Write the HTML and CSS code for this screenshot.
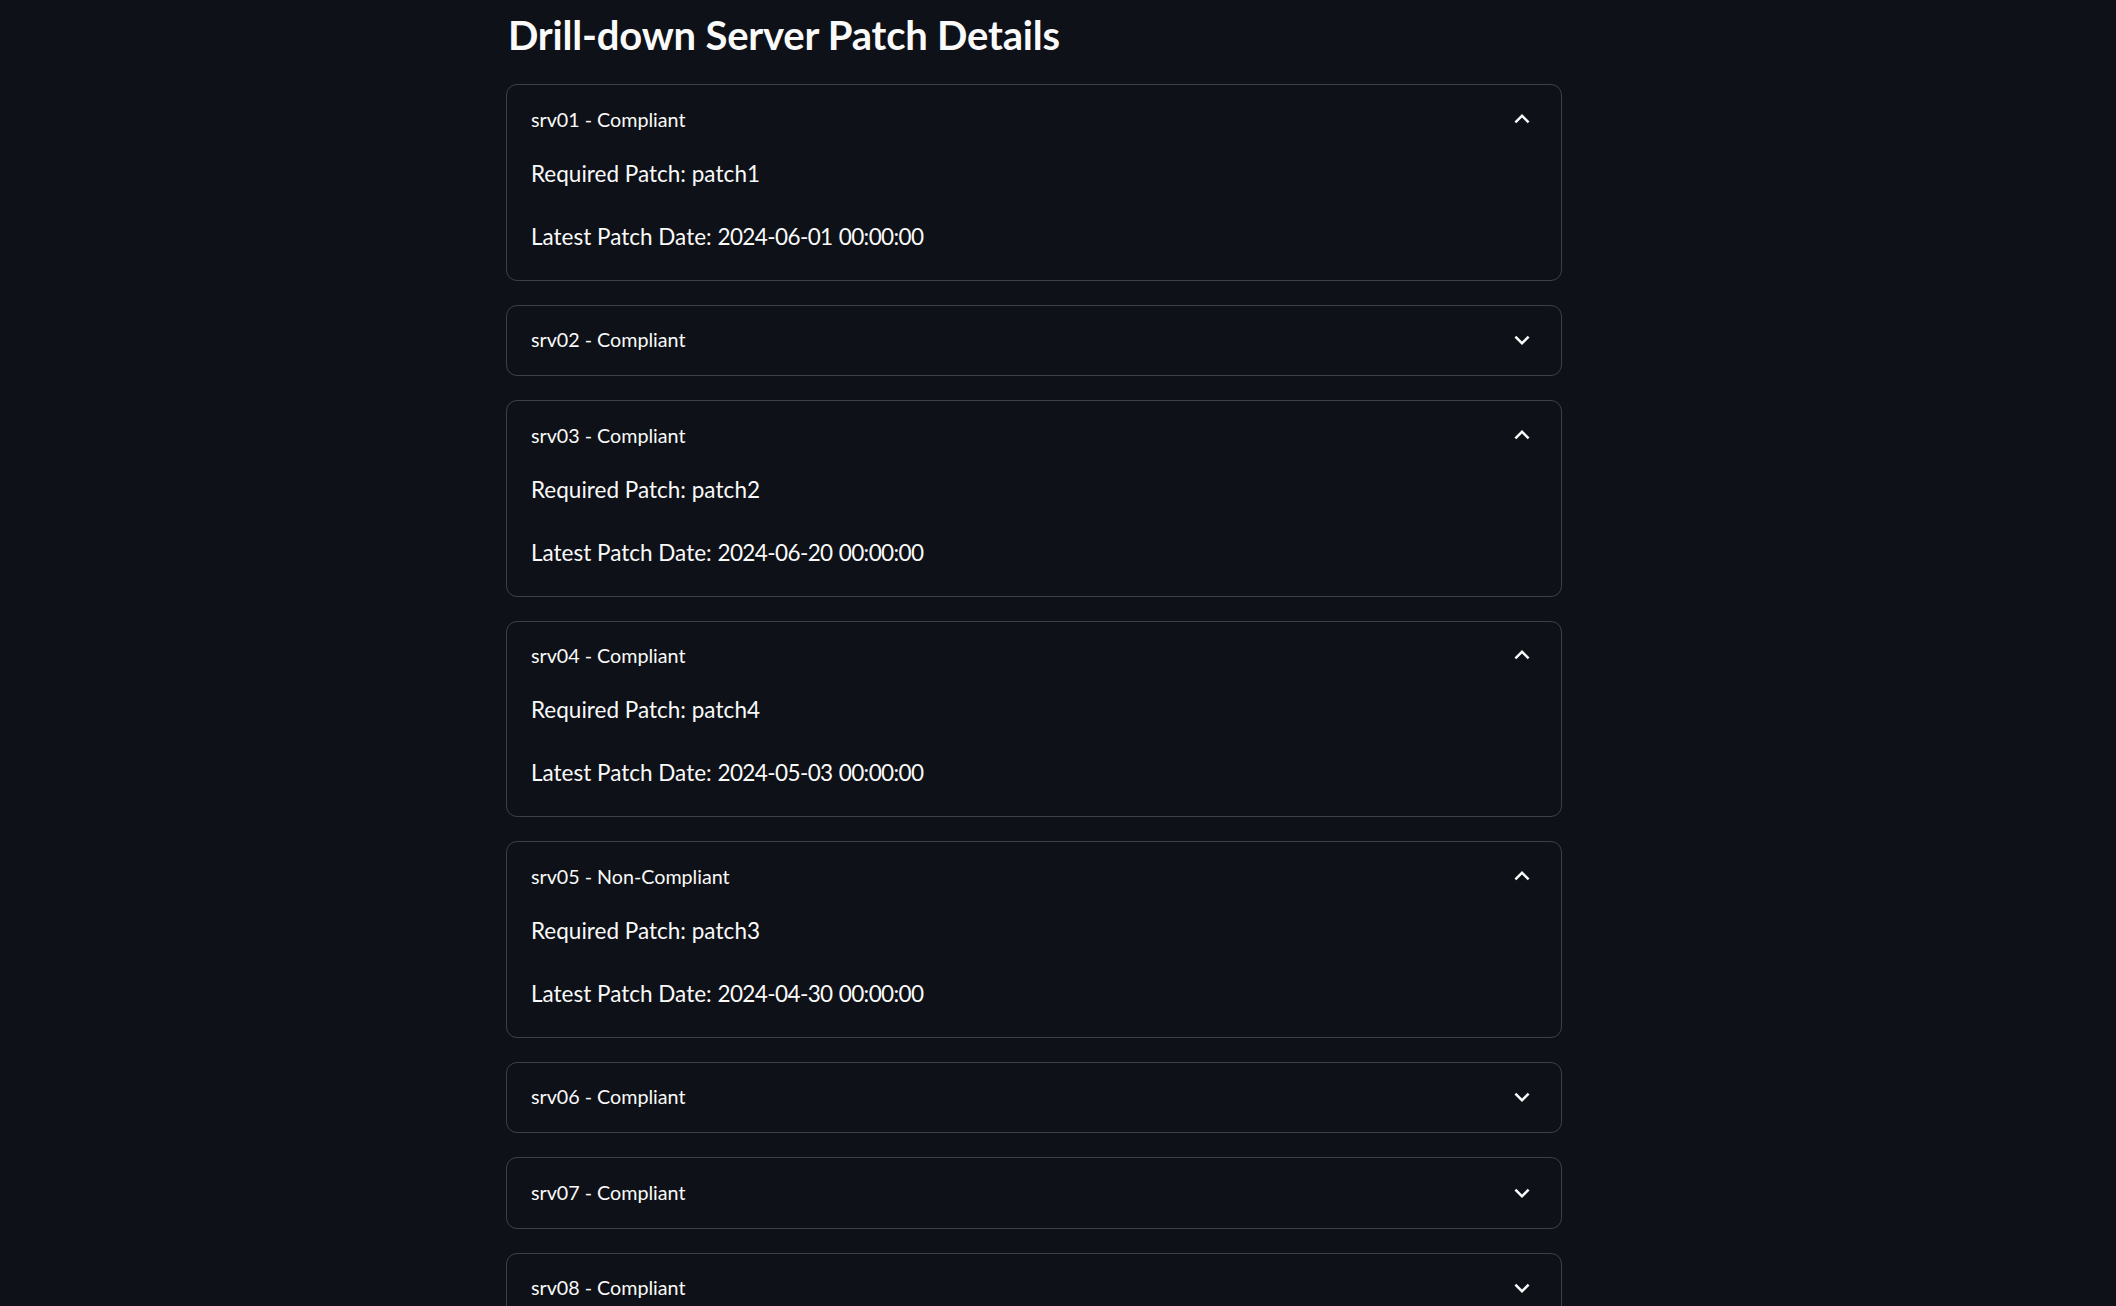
FILE: index.html
```html
<!DOCTYPE html>
<html lang="en">
<head>
<meta charset="utf-8">
<title>Drill-down Server Patch Details</title>
<link rel="stylesheet" href="styles.css">
</head>
<body>
<main class="main">
  <h3 class="page-title">Drill-down Server Patch Details</h3>
  <div class="expander-list">
    <details class="expander" open>
      <summary class="expander-header">
        <span class="expander-label">srv01 - Compliant</span>
        <svg class="chev chev-up" viewBox="0 0 24 24"><path d="M12 8l-6 6 1.41 1.41L12 10.83l4.59 4.58L18 14z"/></svg>
        <svg class="chev chev-down" viewBox="0 0 24 24"><path d="M16.59 8.59 12 13.17 7.41 8.59 6 10l6 6 6-6z"/></svg>
      </summary>
      <div class="expander-body">
        <p>Required Patch: <span class="value">patch1</span></p>
        <p>Latest Patch Date: <span class="value date">2024-06-01 00:00:00</span></p>
      </div>
    </details>
    <details class="expander">
      <summary class="expander-header">
        <span class="expander-label">srv02 - Compliant</span>
        <svg class="chev chev-up" viewBox="0 0 24 24"><path d="M12 8l-6 6 1.41 1.41L12 10.83l4.59 4.58L18 14z"/></svg>
        <svg class="chev chev-down" viewBox="0 0 24 24"><path d="M16.59 8.59 12 13.17 7.41 8.59 6 10l6 6 6-6z"/></svg>
      </summary>
    </details>
    <details class="expander" open>
      <summary class="expander-header">
        <span class="expander-label">srv03 - Compliant</span>
        <svg class="chev chev-up" viewBox="0 0 24 24"><path d="M12 8l-6 6 1.41 1.41L12 10.83l4.59 4.58L18 14z"/></svg>
        <svg class="chev chev-down" viewBox="0 0 24 24"><path d="M16.59 8.59 12 13.17 7.41 8.59 6 10l6 6 6-6z"/></svg>
      </summary>
      <div class="expander-body">
        <p>Required Patch: <span class="value">patch2</span></p>
        <p>Latest Patch Date: <span class="value date">2024-06-20 00:00:00</span></p>
      </div>
    </details>
    <details class="expander" open>
      <summary class="expander-header">
        <span class="expander-label">srv04 - Compliant</span>
        <svg class="chev chev-up" viewBox="0 0 24 24"><path d="M12 8l-6 6 1.41 1.41L12 10.83l4.59 4.58L18 14z"/></svg>
        <svg class="chev chev-down" viewBox="0 0 24 24"><path d="M16.59 8.59 12 13.17 7.41 8.59 6 10l6 6 6-6z"/></svg>
      </summary>
      <div class="expander-body">
        <p>Required Patch: <span class="value">patch4</span></p>
        <p>Latest Patch Date: <span class="value date">2024-05-03 00:00:00</span></p>
      </div>
    </details>
    <details class="expander" open>
      <summary class="expander-header">
        <span class="expander-label">srv05 - Non-Compliant</span>
        <svg class="chev chev-up" viewBox="0 0 24 24"><path d="M12 8l-6 6 1.41 1.41L12 10.83l4.59 4.58L18 14z"/></svg>
        <svg class="chev chev-down" viewBox="0 0 24 24"><path d="M16.59 8.59 12 13.17 7.41 8.59 6 10l6 6 6-6z"/></svg>
      </summary>
      <div class="expander-body">
        <p>Required Patch: <span class="value">patch3</span></p>
        <p>Latest Patch Date: <span class="value date">2024-04-30 00:00:00</span></p>
      </div>
    </details>
    <details class="expander">
      <summary class="expander-header">
        <span class="expander-label">srv06 - Compliant</span>
        <svg class="chev chev-up" viewBox="0 0 24 24"><path d="M12 8l-6 6 1.41 1.41L12 10.83l4.59 4.58L18 14z"/></svg>
        <svg class="chev chev-down" viewBox="0 0 24 24"><path d="M16.59 8.59 12 13.17 7.41 8.59 6 10l6 6 6-6z"/></svg>
      </summary>
    </details>
    <details class="expander">
      <summary class="expander-header">
        <span class="expander-label">srv07 - Compliant</span>
        <svg class="chev chev-up" viewBox="0 0 24 24"><path d="M12 8l-6 6 1.41 1.41L12 10.83l4.59 4.58L18 14z"/></svg>
        <svg class="chev chev-down" viewBox="0 0 24 24"><path d="M16.59 8.59 12 13.17 7.41 8.59 6 10l6 6 6-6z"/></svg>
      </summary>
    </details>
    <details class="expander">
      <summary class="expander-header">
        <span class="expander-label">srv08 - Compliant</span>
        <svg class="chev chev-up" viewBox="0 0 24 24"><path d="M12 8l-6 6 1.41 1.41L12 10.83l4.59 4.58L18 14z"/></svg>
        <svg class="chev chev-down" viewBox="0 0 24 24"><path d="M16.59 8.59 12 13.17 7.41 8.59 6 10l6 6 6-6z"/></svg>
      </summary>
    </details>
  </div>
</main>
</body>
</html>
```
FILE: styles.css
```css
html, body {
  margin: 0;
  padding: 0;
  background: #0e1117;
  color: #fafafa;
  font-family: Lato, "Noto Sans", sans-serif;
}

.main {
  width: 1056px;
  margin: 0 auto;
  padding: 11px 48px 60px 0;
  box-sizing: content-box;
}

.page-title {
  margin: 0 0 25px 2px;
  font-size: 40px;
  line-height: 48px;
  font-weight: 700;
  letter-spacing: -0.2px;
  color: #fafafa;
}

.expander-list {
  display: flex;
  flex-direction: column;
  gap: 24px;
}

.expander {
  border: 1px solid rgba(250, 250, 250, 0.2);
  border-radius: 11px;
}

.expander-header {
  list-style: none;
  display: flex;
  align-items: center;
  justify-content: space-between;
  height: 69.5px;
  padding: 0 24px;
  cursor: pointer;
}

.expander-header::-webkit-details-marker {
  display: none;
}

.expander-label {
  font-size: 19.7px;
  line-height: 30px;
}

.chev {
  width: 30px;
  height: 30px;
  fill: #fafafa;
  flex: none;
}

.chev-up {
  display: none;
  margin-top: -2px;
}

.expander[open] .chev-up {
  display: block;
}

.expander[open] .chev-down {
  display: none;
}

.expander-body {
  padding: 1px 24px 25px;
}

.expander-body p {
  margin: 0 0 27px;
  font-size: 22.5px;
  line-height: 36px;
}

.expander-body p:last-child {
  margin-bottom: 0;
}

.value {
  letter-spacing: 0.1px;
}

.value.date {
  letter-spacing: -0.6px;
  word-spacing: 1px;
}
```
